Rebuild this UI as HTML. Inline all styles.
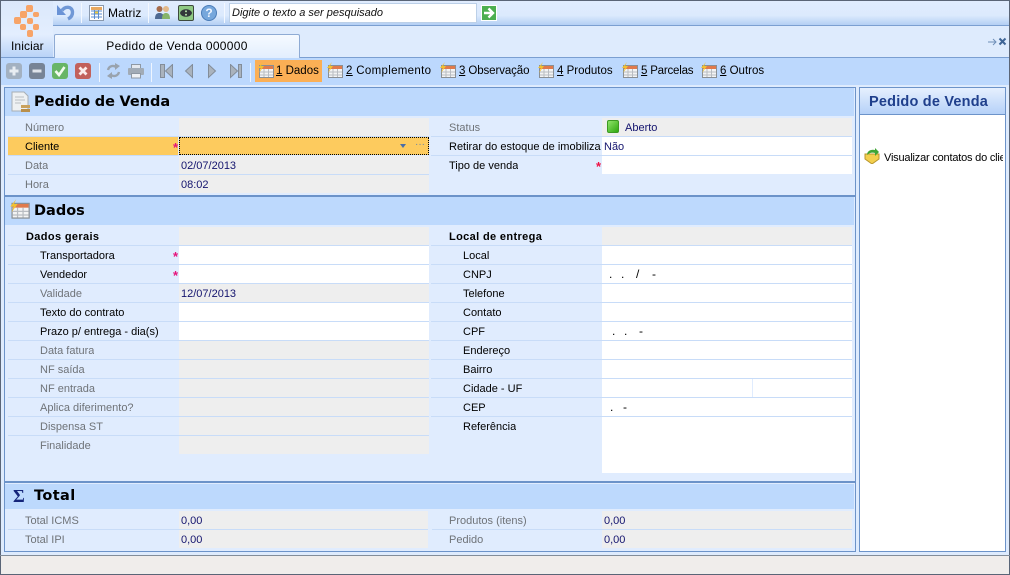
<!DOCTYPE html>
<html lang="pt"><head><meta charset="utf-8"><title>Pedido de Venda</title>
<style>
html,body{margin:0;padding:0;background:#deebfd}
#p{position:relative;width:1010px;height:575px;overflow:hidden;background:#deebfd;font:11px/20px "Liberation Sans",sans-serif;color:#000}
#p div,#p svg,#p span.a{position:absolute}
.l{height:19px;white-space:nowrap;overflow:hidden}
.g{color:#6f7378}
.b{font-weight:bold;letter-spacing:.36px}
.v{height:18px;color:#14146e;padding-left:2px;box-sizing:border-box;line-height:20px;white-space:nowrap;overflow:hidden}
.e{background:#eeeeee}.w{background:#fff}
.ln{height:1px;background:#c8dcf8}
.st{color:#e6127a;font-size:13px;font-weight:bold;line-height:13px}
.h{left:5px;width:849px;background:#bdd9fd}
.t{left:34px;font:bold 14.5px/20px "DejaVu Sans",sans-serif;color:#000;word-spacing:-.5px}
.sep{width:1px;background:#f3f8ff;top:3px;height:20px}
.sep2{width:1px;background:#eef5ff;top:63px;height:19px}
.tb{top:61px;height:20px;line-height:20px;white-space:nowrap;font-size:11.5px}
.d{line-height:20px;font-size:12px}
u{text-decoration:underline}
</style></head><body><div id="p">
<!-- top bar -->
<div style="left:0;top:0;width:1010px;height:1px;background:#5a6577"></div>
<div style="left:0;top:1px;width:1010px;height:24px;background:linear-gradient(#e0ecfe 0,#dceafd 60%,#b4cff4 100%)"></div>
<div style="left:0;top:25px;width:1010px;height:1px;background:#7b9fd1"></div>
<div style="left:0;top:26px;width:1010px;height:31px;background:#deebfd"></div>
<div style="left:1px;top:1px;width:52px;height:56px;background:linear-gradient(#dbe8fb 0,#e3eefe 60%,#b9d3f7 100%)"></div>
<div style="left:0;top:57px;width:1010px;height:1px;background:#7b9fd1"></div>
<div style="left:0;top:58px;width:1010px;height:27px;background:#bcd8fd"></div>
<div style="left:0;top:0;width:1px;height:575px;background:#5a6577"></div>
<div style="left:1009px;top:0;width:1px;height:575px;background:#5a6577"></div>
<!-- logo -->
<svg style="left:0;top:0" width="54" height="40" viewBox="0 0 54 40"><g fill="#f7a468"><rect x="26" y="5" width="7" height="7" rx="2"/><rect x="20" y="11" width="7" height="7" rx="2"/><rect x="33" y="12" width="6" height="5" rx="2"/><rect x="14" y="17" width="7" height="7" rx="2"/><rect x="27" y="18" width="6" height="6" rx="2"/><rect x="20" y="24" width="6" height="6" rx="2"/><rect x="33" y="24" width="6" height="6" rx="2"/><rect x="27" y="30" width="6" height="7" rx="2"/></g></svg>
<div style="left:11px;top:37px;height:18px;line-height:18px;font-size:12px;letter-spacing:.1px">Iniciar</div>
<!-- undo -->
<svg style="left:57px;top:3px" width="18" height="18" viewBox="0 0 18 18"><path d="M5 7.500C8 3 15 3 15.500 9C15.700 12 14 14.500 11 16" fill="none" stroke="#7098d6" stroke-width="3.400"/><path d="M0 2 L0 12 L9 12 Z" fill="#6a93d6"/></svg>
<div class="sep" style="left:81px"></div>
<!-- matriz -->
<svg style="left:89px;top:5px" width="15" height="16" viewBox="0 0 15 16"><rect x=".5" y=".5" width="14" height="15" fill="#fff" stroke="#8a99ad"/><rect x="2" y="2" width="11" height="3" fill="#e8a860"/><path d="M2 6h11M2 9h11M2 12h11M5.500 5v9M9.500 5v9" stroke="#5b8ed0" fill="none"/><rect x="6" y="6.500" width="3" height="2" fill="#f5d040"/></svg>
<div style="left:108px;top:3px;height:19px;font-size:12px;letter-spacing:.15px">Matriz</div>
<div class="sep" style="left:148px"></div>
<!-- people -->
<svg style="left:154px;top:5px" width="17" height="15" viewBox="0 0 17 15"><circle cx="5.500" cy="4" r="3" fill="#a56b4b"/><path d="M1 14c0-5 2-6 4.500-6S10 9 10 14Z" fill="#4f6a92"/><circle cx="12" cy="4" r="3" fill="#e3b98a"/><path d="M8 14c0-5 2-6 4-6s4 1 4 6Z" fill="#86b46a"/></svg>
<!-- eye -->
<div style="left:178px;top:5px;width:14px;height:14px;background:#8fca84;border:1px solid #3d4a3d;border-radius:2px"></div>
<svg style="left:179px;top:7px" width="14" height="12" viewBox="0 0 14 12"><path d="M1 6C2 1 12 1 13 6C12 11 2 11 1 6Z" fill="#33383a"/><path d="M6 3.500h2v5H6Z" fill="#a9d6a0"/><circle cx="7" cy="6" r="1" fill="#222"/></svg>
<!-- help -->
<div style="left:201px;top:5px;width:14px;height:14px;border-radius:50%;background:#76a7dc;border:1px solid #4a7cb8;color:#eef5ff;font:bold 12px/14px 'Liberation Sans',sans-serif;text-align:center">?</div>
<div class="sep" style="left:224px"></div>
<!-- search -->
<div style="left:229px;top:3px;width:244px;height:18px;background:#fff;border:1px solid #bcd0e8;font:italic 11px/18px 'Liberation Sans',sans-serif;padding-left:2px;white-space:nowrap;color:#111">Digite o texto a ser pesquisado</div>
<svg style="left:481px;top:5px" width="16" height="16" viewBox="0 0 16 16"><rect width="16" height="16" fill="#fff"/><rect x="1" y="1" width="14" height="14" fill="#4caf50"/><path d="M3 8h8M7.500 3.500 12 8l-4.500 4.500" fill="none" stroke="#fff" stroke-width="2.400"/></svg>
<!-- tab -->
<div style="left:54px;top:34px;width:244px;height:23px;background:linear-gradient(#f6faff,#e2eefe);border:1px solid #8fabd4;border-bottom:0;border-radius:2px 2px 0 0;text-align:center;line-height:23px;font-size:12px;letter-spacing:.3px">Pedido de Venda 000000</div>
<div style="left:55px;top:57px;width:244px;height:1px;background:#e2eefe"></div>
<svg style="left:987px;top:37px" width="20" height="10" viewBox="0 0 20 10"><path d="M1 5h8M6 2l3 3-3 3" fill="none" stroke="#6f8fb8"/><path d="M12.500 1.500l6 6M18.500 1.500l-6 6" fill="none" stroke="#3f6596" stroke-width="2"/></svg>
<!-- toolbar buttons -->
<div style="left:6px;top:63px;width:16px;height:16px;border-radius:3px;background:#a3b1c1"></div>
<svg style="left:6px;top:63px" width="16" height="16"><path d="M8 3.500v9M3.500 8h9" stroke="#e8edf2" stroke-width="3"/></svg>
<div style="left:29px;top:63px;width:16px;height:16px;border-radius:3px;background:#778496"></div>
<svg style="left:29px;top:63px" width="16" height="16"><path d="M3.500 8h9" stroke="#dfe4ea" stroke-width="3"/></svg>
<div style="left:52px;top:63px;width:16px;height:16px;border-radius:3px;background:#68b566"></div>
<svg style="left:52px;top:63px" width="16" height="16"><path d="M3.500 8 7 12 12.500 4" fill="none" stroke="#f2fbef" stroke-width="2.600"/></svg>
<div style="left:75px;top:63px;width:16px;height:16px;border-radius:3px;background:#c2615b"></div>
<svg style="left:75px;top:63px" width="16" height="16"><path d="M4.500 4.500l7 7M11.500 4.500l-7 7" stroke="#fbecea" stroke-width="2.800"/></svg>
<div class="sep2" style="left:99px"></div>
<svg style="left:106px;top:63px" width="15" height="16" viewBox="0 0 15 16"><path d="M2 7C3 3 7 2 10 4M13 9C12 13 8 14 5 12" fill="none" stroke="#99a3ae" stroke-width="2.400"/><path d="M9 0l5 3-5 4ZM6 9l-5 4 5 3Z" fill="#99a3ae"/></svg>
<svg style="left:127px;top:63px" width="18" height="16" viewBox="0 0 18 16"><rect x="4.500" y="1.500" width="9" height="5" fill="#e4e8ee" stroke="#8e98a3"/><rect x="1" y="5" width="16" height="7" rx="1" fill="#a1abb6"/><rect x="4.500" y="10.500" width="9" height="4.500" fill="#eef1f5" stroke="#8e98a3"/></svg>
<div class="sep2" style="left:151px"></div>
<svg style="left:158px;top:64px" width="86" height="15" viewBox="0 0 86 15" fill="#aab3bd" stroke="#838d99"><rect x="2.500" y=".5" width="4" height="13"/><path d="M14.500 .5v13L7.500 7Z"/><path d="M34.500 .5v13L27.500 7Z"/><path d="M50.500 .5v13L57.500 7Z"/><path d="M72.500 .5v13L79.500 7Z"/><rect x="80.500" y=".5" width="3" height="13"/></svg>
<div class="sep2" style="left:250px"></div>
<!-- tabs -->
<div style="left:255px;top:60px;width:67px;height:22px;background:#fbaf55"></div>
<svg width="0" height="0" style="left:0;top:0"><defs><g id="ic"><rect x="2.500" y="3.500" width="14" height="12" fill="#f4f4f4" stroke="#8a8f94"/><rect x="3" y="4" width="13" height="3" fill="#e07a4c"/><path d="M3 10h13M3 13h13M7 7v8M11.500 7v8" stroke="#b9bdc2" fill="none"/><path d="M6 0 1 6h3l-2 5 5-7H4Z" fill="#f2c230"/></g></defs></svg>
<svg style="left:257px;top:62px" width="18" height="17"><use href="#ic"/></svg>
<div class="tb" style="left:276px"><u>1</u> Dados</div>
<svg style="left:326px;top:62px" width="18" height="17"><use href="#ic"/></svg>
<div class="tb" style="left:346px;letter-spacing:.32px"><u>2</u> Complemento</div>
<svg style="left:439px;top:62px" width="18" height="17"><use href="#ic"/></svg>
<div class="tb" style="left:459px;letter-spacing:-.1px"><u>3</u> Observação</div>
<svg style="left:537px;top:62px" width="18" height="17"><use href="#ic"/></svg>
<div class="tb" style="left:557px"><u>4</u> Produtos</div>
<svg style="left:621px;top:62px" width="18" height="17"><use href="#ic"/></svg>
<div class="tb" style="left:641px;letter-spacing:-.2px"><u>5</u> Parcelas</div>
<svg style="left:700px;top:62px" width="18" height="17"><use href="#ic"/></svg>
<div class="tb" style="left:720px"><u>6</u> Outros</div>
<!-- main panel -->
<div style="left:4px;top:87px;width:850px;height:463px;border:1px solid #6c93c9;background:#e0ecfe"></div>
<div class="h" style="top:88px;height:28px"></div>
<svg style="left:11px;top:91px" width="19" height="22" viewBox="0 0 19 22"><path d="M1 1h12l4 4v15H1Z" fill="#eef1f3" stroke="#a8afb5"/><path d="M4 6h9M4 9h10M4 12h6" stroke="#b9bec3"/><rect x="10" y="14" width="9" height="3" fill="#c9a25e"/><rect x="10" y="18" width="9" height="3" fill="#b98f4a"/></svg>
<div class="t" style="top:92px">Pedido de Venda</div>
<!-- section 1 rows left -->
<div class="l g" style="left:25px;top:118px">Número</div>
<div class="e" style="left:179px;top:118px;width:250px;height:18px"></div>
<div style="left:8px;top:137px;width:170px;height:18px;background:#fdcb5e"></div>
<div class="l" style="left:25px;top:137px;height:18px">Cliente</div>
<div class="st" style="left:173px;top:141px">*</div>
<div style="left:179px;top:137px;width:250px;height:18px;background:#fdcb5e;border:1px dotted #000;box-sizing:border-box"></div>
<svg style="left:399px;top:143px" width="8" height="6"><path d="M1 1h6L4 5Z" fill="#4a6ea8"/></svg>
<div style="left:415px;top:140px;color:#6c86a8;font-size:10px;line-height:10px">···</div>
<div class="ln" style="left:8px;top:136px;width:421px"></div>
<div class="l g" style="left:25px;top:156px">Data</div>
<div class="v e" style="left:179px;top:156px;width:250px">02/07/2013</div>
<div class="ln" style="left:8px;top:174px;width:421px"></div>
<div class="l g" style="left:25px;top:175px">Hora</div>
<div class="v e" style="left:179px;top:175px;width:250px">08:02</div>
<div class="ln" style="left:8px;top:155px;width:170px"></div>
<!-- section 1 right -->
<div class="l g" style="left:449px;top:118px">Status</div>
<div class="v e" style="left:602px;top:118px;width:250px;padding-left:23px">Aberto</div>
<div style="left:607px;top:120px;width:10px;height:11px;background:linear-gradient(135deg,#8fe36a,#2fa80f);border:1px solid #3c9a22;border-radius:2px"></div>
<div class="ln" style="left:431px;top:136px;width:421px"></div>
<div class="l" style="left:449px;top:137px;width:152px">Retirar do estoque de imobilização</div>
<div class="v w" style="left:602px;top:137px;width:250px">Não</div>
<div class="ln" style="left:431px;top:155px;width:421px"></div>
<div class="l" style="left:449px;top:156px">Tipo de venda</div>
<div class="st" style="left:596px;top:160px;color:#ee1144">*</div>
<div class="w" style="left:602px;top:156px;width:250px;height:18px"></div>
<!-- dados header -->
<div style="left:4px;top:195px;width:852px;height:2px;background:#6c93c9"></div>
<div class="h" style="top:197px;height:28px"></div>
<svg style="left:9px;top:199px" width="22" height="21" viewBox="0 0 18 17"><use href="#ic"/></svg>
<div class="t" style="top:201px">Dados</div>
<!-- dados left -->
<div class="l b" style="left:26px;top:227px">Dados gerais</div>
<div class="e" style="left:179px;top:227px;width:250px;height:18px"></div>
<div class="ln" style="left:8px;top:245px;width:421px"></div>
<div class="l" style="left:40px;top:246px">Transportadora</div><div class="st" style="left:173px;top:250px">*</div><div class="w" style="left:179px;top:246px;width:250px;height:18px"></div>
<div class="ln" style="left:8px;top:264px;width:421px"></div>
<div class="l" style="left:40px;top:265px">Vendedor</div><div class="st" style="left:173px;top:269px">*</div><div class="w" style="left:179px;top:265px;width:250px;height:18px"></div>
<div class="ln" style="left:8px;top:283px;width:421px"></div>
<div class="l g" style="left:40px;top:284px">Validade</div><div class="v e" style="left:179px;top:284px;width:250px">12/07/2013</div>
<div class="ln" style="left:8px;top:302px;width:421px"></div>
<div class="l" style="left:40px;top:303px">Texto do contrato</div><div class="w" style="left:179px;top:303px;width:250px;height:18px"></div>
<div class="ln" style="left:8px;top:321px;width:421px"></div>
<div class="l" style="left:40px;top:322px">Prazo p/ entrega - dia(s)</div><div class="w" style="left:179px;top:322px;width:250px;height:18px"></div>
<div class="ln" style="left:8px;top:340px;width:421px"></div>
<div class="l g" style="left:40px;top:341px">Data fatura</div><div class="e" style="left:179px;top:341px;width:250px;height:18px"></div>
<div class="ln" style="left:8px;top:359px;width:421px"></div>
<div class="l g" style="left:40px;top:360px">NF saída</div><div class="e" style="left:179px;top:360px;width:250px;height:18px"></div>
<div class="ln" style="left:8px;top:378px;width:421px"></div>
<div class="l g" style="left:40px;top:379px">NF entrada</div><div class="e" style="left:179px;top:379px;width:250px;height:18px"></div>
<div class="ln" style="left:8px;top:397px;width:421px"></div>
<div class="l g" style="left:40px;top:398px">Aplica diferimento?</div><div class="e" style="left:179px;top:398px;width:250px;height:18px"></div>
<div class="ln" style="left:8px;top:416px;width:421px"></div>
<div class="l g" style="left:40px;top:417px">Dispensa ST</div><div class="e" style="left:179px;top:417px;width:250px;height:18px"></div>
<div class="ln" style="left:8px;top:435px;width:421px"></div>
<div class="l g" style="left:40px;top:436px">Finalidade</div><div class="e" style="left:179px;top:436px;width:250px;height:18px"></div>
<!-- dados right -->
<div class="l b" style="left:449px;top:227px">Local de entrega</div>
<div class="e" style="left:602px;top:227px;width:250px;height:18px"></div>
<div class="ln" style="left:431px;top:245px;width:421px"></div>
<div class="l" style="left:463px;top:246px">Local</div><div class="w" style="left:602px;top:246px;width:250px;height:18px"></div>
<div class="ln" style="left:431px;top:264px;width:421px"></div>
<div class="l" style="left:463px;top:265px">CNPJ</div><div class="w" style="left:602px;top:265px;width:250px;height:18px"></div>
<div class="d" style="left:609px;top:264px">.</div><div class="d" style="left:621px;top:264px">.</div><div class="d" style="left:636px;top:264px">/</div><div class="d" style="left:652px;top:264px">-</div>
<div class="ln" style="left:431px;top:283px;width:421px"></div>
<div class="l" style="left:463px;top:284px">Telefone</div><div class="w" style="left:602px;top:284px;width:250px;height:18px"></div>
<div class="ln" style="left:431px;top:302px;width:421px"></div>
<div class="l" style="left:463px;top:303px">Contato</div><div class="w" style="left:602px;top:303px;width:250px;height:18px"></div>
<div class="ln" style="left:431px;top:321px;width:421px"></div>
<div class="l" style="left:463px;top:322px">CPF</div><div class="w" style="left:602px;top:322px;width:250px;height:18px"></div>
<div class="d" style="left:612px;top:321px">.</div><div class="d" style="left:624px;top:321px">.</div><div class="d" style="left:639px;top:321px">-</div>
<div class="ln" style="left:431px;top:340px;width:421px"></div>
<div class="l" style="left:463px;top:341px">Endereço</div><div class="w" style="left:602px;top:341px;width:250px;height:18px"></div>
<div class="ln" style="left:431px;top:359px;width:421px"></div>
<div class="l" style="left:463px;top:360px">Bairro</div><div class="w" style="left:602px;top:360px;width:250px;height:18px"></div>
<div class="ln" style="left:431px;top:378px;width:421px"></div>
<div class="l" style="left:463px;top:379px">Cidade - UF</div><div class="w" style="left:602px;top:379px;width:150px;height:18px"></div><div class="w" style="left:753px;top:379px;width:99px;height:18px"></div>
<div class="ln" style="left:431px;top:397px;width:421px"></div>
<div class="l" style="left:463px;top:398px">CEP</div><div class="w" style="left:602px;top:398px;width:250px;height:18px"></div>
<div class="d" style="left:610px;top:397px">.</div><div class="d" style="left:623px;top:397px">-</div>
<div class="ln" style="left:431px;top:416px;width:421px"></div>
<div class="l" style="left:463px;top:417px">Referência</div><div class="w" style="left:602px;top:417px;width:250px;height:56px"></div>
<!-- total -->
<div style="left:4px;top:481px;width:852px;height:2px;background:#6c93c9"></div>
<div class="h" style="top:484px;height:25px"></div>
<div style="left:13px;top:486px;color:#14247a;font:bold 18px/20px 'Liberation Serif',serif">Σ</div>
<div class="t" style="top:486px;letter-spacing:.4px">Total</div>
<div class="l g" style="left:25px;top:511px">Total ICMS</div><div class="v e" style="left:179px;top:511px;width:249px">0,00</div>
<div class="ln" style="left:8px;top:529px;width:420px"></div>
<div class="l g" style="left:25px;top:530px">Total IPI</div><div class="v e" style="left:179px;top:530px;width:249px">0,00</div>
<div class="l g" style="left:449px;top:511px">Produtos (itens)</div><div class="v e" style="left:602px;top:511px;width:250px">0,00</div>
<div class="ln" style="left:432px;top:529px;width:420px"></div>
<div class="l g" style="left:449px;top:530px">Pedido</div><div class="v e" style="left:602px;top:530px;width:250px">0,00</div>
<!-- right panel -->
<div style="left:859px;top:87px;width:145px;height:463px;border:1px solid #6c93c9;background:#fff"></div>
<div style="left:860px;top:88px;width:145px;height:26px;background:linear-gradient(#e6f0fe,#b5d1f8);border-bottom:1px solid #6c93c9"></div>
<div style="left:869px;top:92px;color:#1f3f8c;font:bold 14.5px/20px 'Liberation Sans',sans-serif;letter-spacing:.2px;white-space:nowrap">Pedido de Venda</div>
<svg style="left:864px;top:148px" width="16" height="16" viewBox="0 0 16 16"><path d="M1 6h14v5l-7 5-7-5Z" fill="#f3cf4d" stroke="#b8962e"/><path d="M3 7C3 3 7 1 11 2V0l4 4-4 4V5C8 4 5 5 3 7Z" fill="#3fa535"/></svg>
<div class="l" style="left:884px;top:148px;width:119px;letter-spacing:-.2px">Visualizar contatos do cliente</div>
<!-- status bar -->
<div style="left:0;top:555px;width:1010px;height:1px;background:#838d99"></div>
<div style="left:1px;top:556px;width:1008px;height:18px;background:#f0edeb"></div>
<div style="left:0;top:574px;width:1010px;height:1px;background:#5a6577"></div>
</div></body></html>
